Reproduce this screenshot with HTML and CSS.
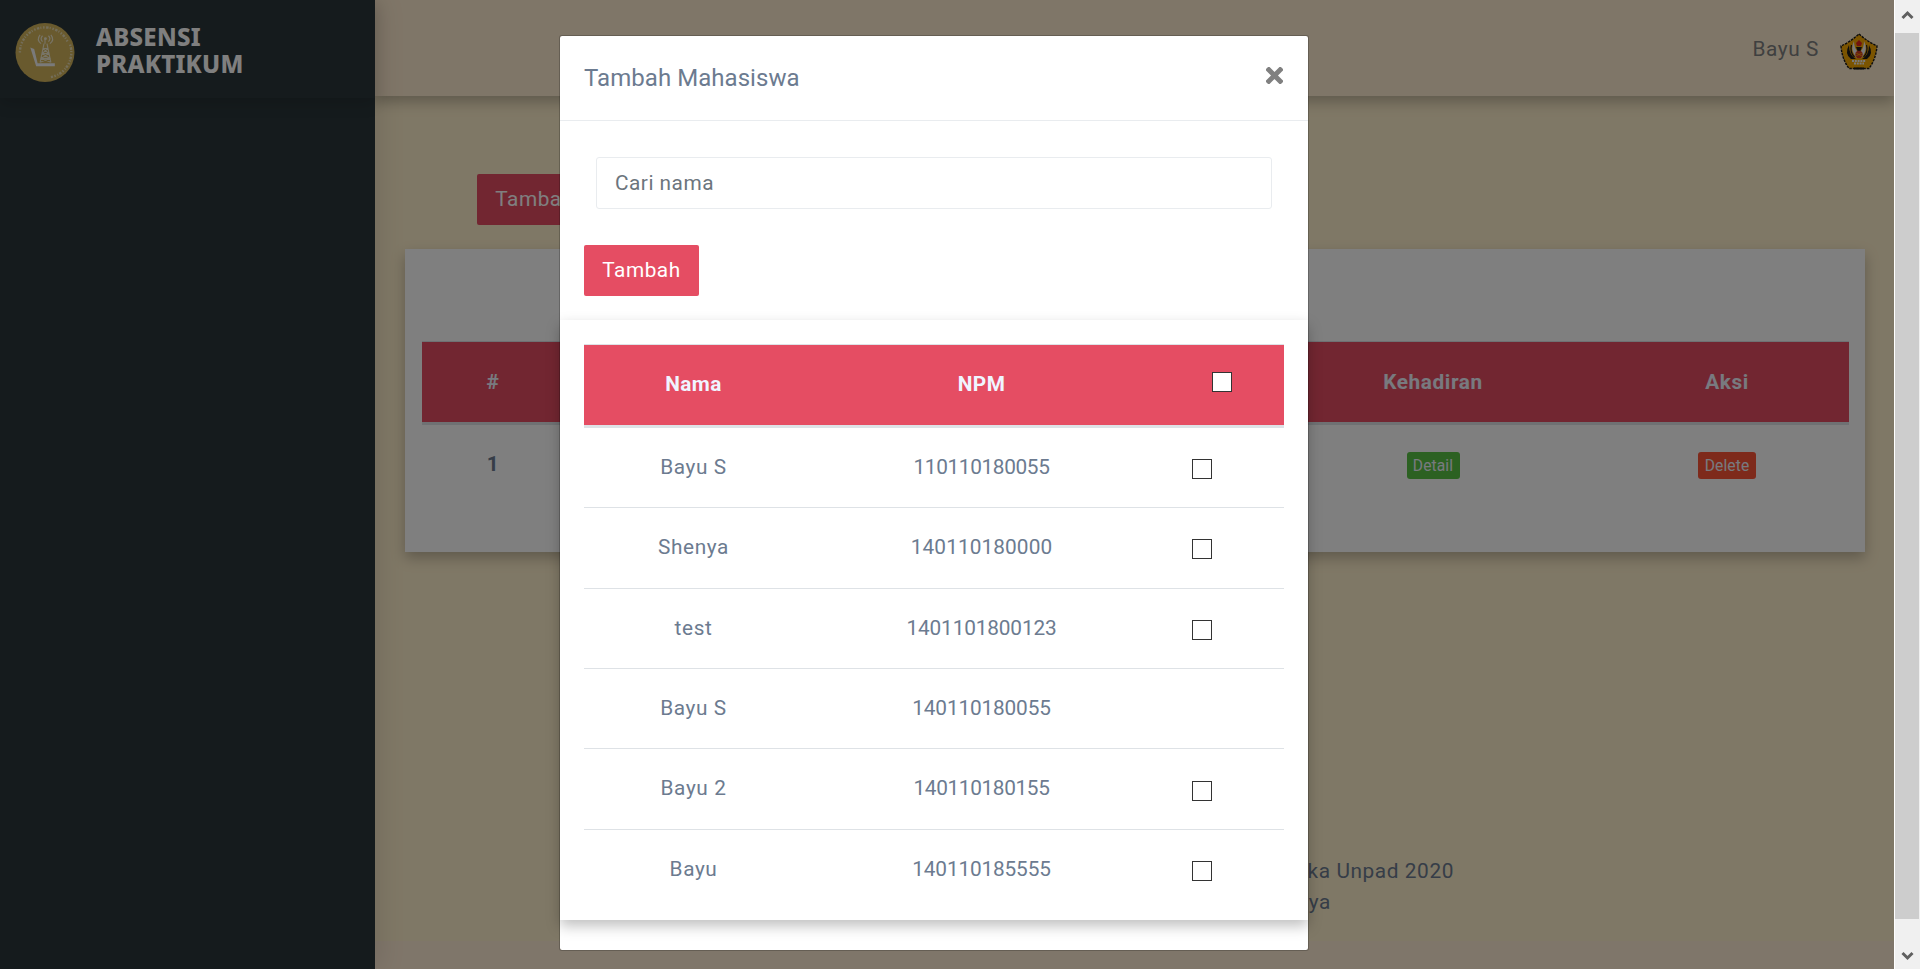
FILE: index.html
```html
<!DOCTYPE html>
<html lang="id">
<head>
<meta charset="utf-8">
<title>Absensi Praktikum</title>
<link rel="stylesheet" href="styles.css">
</head>
<body>
<div class="page">
  <aside class="sidebar">
    <div class="brand">
      <svg class="brand-logo" viewBox="0 0 60 60">
        <circle cx="30" cy="30" r="30" fill="#d2b45c"/>
        <path d="M4.500 30A25.500 25.500 0 0 1 53 19" fill="none" stroke="#e9ddb4" stroke-width="2.400" stroke-dasharray="1.500 1.500 2.500 1.200 1 1.800"/>
        <path d="M55.500 22A25.500 25.500 0 0 1 36 55" fill="none" stroke="#e9ddb4" stroke-width="2.400" stroke-dasharray="1.500 1.500 2.500 1.200 1 1.800"/>
        <path d="M15 25l4 1.500 3.500 14.500H40v3H21z" fill="#f4f4f4"/>
        <path d="M30 15v6M29 21l-4 19M32 21l4 19M28 26h5M27 31h7M26 36h9M28 26l6 5-8 5 10 4M33 26l-6 5 8 5-10 4" fill="none" stroke="#f1ead0" stroke-width="1.100"/>
        <path d="M27.500 13q-3 3 0 6M25 12q-4 5 1 9M33.500 13q3 3 0 6M36 12q4 5-1 9" fill="none" stroke="#f1ead0" stroke-width="1.200"/>
        <circle cx="30.500" cy="16" r="1.400" fill="#f1ead0"/>
      </svg>
      <div class="brand-name">ABSENSI<br>PRAKTIKUM</div>
    </div>
  </aside>
  <main class="main">
    <header class="topbar">
      <span class="user">Bayu S</span>
      <svg class="avatar" viewBox="0 0 38 37">
        <path d="M19 1Q28 9 37 13Q36 26 29 35.500H9Q2 26 1 13Q10 9 19 1z" fill="#f6a800" stroke="#191919" stroke-width="1.400" stroke-dasharray="2.500 1"/>
        <path d="M14 8q-4 8 1 15l2 2v-7q-3-4-3-10zM24 8q4 8-1 15l-2 2v-7q3-4 3-10z" fill="#f5f5f5"/>
        <path d="M9 12q-5 9 2 14h5q-7-4-7-14zM29 12q5 9-2 14h-5q7-4 7-14zM16 14h6l-2 5h-2z" fill="#1c1c1c"/>
        <path d="M11.500 12q-2 7 3 12M26.500 12q2 7-3 12" fill="none" stroke="#1c1c1c" stroke-width="1.200"/>
        <path d="M19 7l3 3-1 3h-4l-1-3z" fill="#e5271c"/>
        <circle cx="19" cy="21.500" r="3.700" fill="#d33b23"/>
        <path d="M16 20l6 3M16 23l6-3" stroke="#f6a800" stroke-width=".8"/>
        <path d="M12 28h14M14 30.500h10" stroke="#f5f5f5" stroke-width="1.800" stroke-dasharray="2 .8"/>
        <path d="M14 35.500h10" stroke="#191919" stroke-width="2"/>
      </svg>
    </header>
    <section class="content">
      <button class="btn open-modal">Tambah</button>
      <div class="card sessions">
        <div class="row head"><span>#</span><span></span><span>Kehadiran</span><span>Aksi</span></div>
        <div class="row item"><b>1</b><span></span><span><a class="badge detail">Detail</a></span><span><a class="badge delete">Delete</a></span></div>
      </div>
    </section>
    <footer class="footer">
      <div class="line-one">Informatika Unpad 2020</div>
      <div class="line-two">Shenya</div>
    </footer>
  </main>
  <div class="backdrop">
    <div class="modal">
      <div class="modal-header">
        <h5>Tambah Mahasiswa</h5>
        <svg class="close" viewBox="0 0 17 17"><path d="M2.800 2.800L14.200 14.200M14.200 2.800L2.800 14.200" stroke="#808080" stroke-width="5" stroke-linecap="square"/></svg>
      </div>
      <div class="modal-form">
        <input class="search" type="text" placeholder="Cari nama">
        <button class="btn">Tambah</button>
      </div>
      <div class="students">
        <div class="srow shead"><span>Nama</span><span>NPM</span><i class="check"></i></div>
        <div class="srow"><span>Bayu S</span><span class="npm narrow">110110180055</span><i class="check"></i></div>
        <div class="srow"><span>Shenya</span><span class="npm wide">140110180000</span><i class="check"></i></div>
        <div class="srow"><span>test</span><span class="npm">1401101800123</span><i class="check"></i></div>
        <div class="srow"><span>Bayu S</span><span class="npm">140110180055</span></div>
        <div class="srow"><span>Bayu 2</span><span class="npm narrow">140110180155</span><i class="check"></i></div>
        <div class="srow"><span>Bayu</span><span class="npm">140110185555</span><i class="check"></i></div>
      </div>
    </div>
  </div>
</div>
<div class="scrollbar">
  <svg class="arrow" viewBox="0 0 25 33"><path d="M7.500 18L12.500 13L17.500 18" fill="none" stroke="#606060" stroke-width="3"/></svg>
  <div class="thumb"></div>
  <svg class="arrow arrow-down" viewBox="0 0 25 50"><path d="M7.500 34L12.500 39L17.500 34" fill="none" stroke="#606060" stroke-width="3"/></svg>
</div>
</body>
</html>
```
FILE: styles.css
```css
* { box-sizing: border-box; }
body {
  margin: 0;
  height: 969px;
  display: flex;
  overflow: hidden;
  font: 20.8px/31.2px Roboto, sans-serif;
  letter-spacing: 0.6px;
  color: #6c7b90;
}
.page { position: relative; width: 1894px; height: 969px; display: flex; overflow: hidden; }

.sidebar { width: 375px; background: #2a363a; box-shadow: 5px 0 25px rgba(0, 0, 0, .1); z-index: 1; }
.brand { height: 98px; padding: 23px 0 0 15px; display: flex; gap: 21px; box-shadow: 0 5px 15px rgba(0, 0, 0, .15); }
.brand-logo { width: 60px; height: 59px; }
.brand-name { color: #fff; font: 800 24px/27px "Noto Sans", sans-serif; letter-spacing: 0.25px; }

.main { flex: 1; background: linear-gradient(#fff0cc 0 941px, #ffecd4 941px); display: flex; flex-direction: column; }
.topbar {
  height: 96px;
  padding: 0 16px 0 0;
  background: #ffecd0;
  box-shadow: 0 6px 13px rgba(0, 0, 0, .25);
  display: flex;
  justify-content: flex-end;
  align-items: center;
  gap: 21px;
}
.user { color: #7f8080; padding-top: 3px; }
.avatar { width: 38px; height: 37px; margin-top: 6px; }
.content { height: 456px; padding: 78px 29px 0 30px; }
.btn {
  display: block;
  height: 51px;
  width: 115px;
  padding: 1px 0 0;
  border: 0;
  border-radius: 2px;
  background: #e54d63;
  color: #fff;
  font: inherit;
  letter-spacing: 0.5px;
}
.open-modal { margin-left: 72px; }
.card { background: #fff; box-shadow: 0 6px 13px rgba(0, 0, 0, .25); }
.sessions { margin-top: 24px; height: 303px; padding: 92px 16px 0 17px; }
.row { display: grid; grid-template-columns: 142px 1fr 344px 244px; text-align: center; align-items: center; }
.head {
  height: 84px;
  padding-top: 2px;
  border-top: 1px solid #dee2e6;
  border-bottom: 3px solid #dee2e6;
  background: #e54d63;
  color: #f0f4ff;
  font-weight: 700;
}
.item { height: 80px; }
.item b { color: #6c7b90; }
.badge {
  display: inline-block;
  height: 27px;
  border-radius: 3px;
  color: #f0f4ff;
  font-size: 15.6px;
  line-height: 28px;
  letter-spacing: 0.1px;
}
.detail { width: 53px; background: #59c245; }
.delete { width: 58px; background: #fc5537; }
.footer { margin-top: 304px; color: #6c7b90; text-align: right; }
.line-one { padding-right: 440px; }
.line-two { padding-right: 563px; }

.backdrop {
  position: absolute;
  inset: 0;
  z-index: 2;
  padding-top: 35px;
  background: rgba(0, 0, 0, .5);
}
.modal {
  width: 750px;
  height: 916px;
  margin-left: 559px;
  border: 1px solid rgba(0, 0, 0, .2);
  border-radius: 3px;
  background: #fff;
  background-clip: padding-box;
}
.modal-header {
  height: 85px;
  padding: 0 25px 0 24px;
  border-bottom: 1px solid #e9ecef;
  display: flex;
  justify-content: space-between;
  align-items: center;
}
.modal-header h5 { margin: 2px 0 0; font-size: 24px; font-weight: 400; letter-spacing: 0.05px; }
.close { width: 17px; height: 17px; margin-top: -6px; }
.modal-form { height: 199px; padding: 36px 24px 0; }
.search {
  display: block;
  width: 676px;
  height: 52px;
  margin: 0 0 36px 12px;
  padding: 0 18px;
  border: 1px solid #e9ecef;
  border-radius: 3px;
  background: #fff;
  font: inherit;
  letter-spacing: 0.5px;
}
.search::placeholder { color: #6c757d; opacity: 1; }
.students { height: 600px; padding: 24px 24px 0; background: #fff; box-shadow: 0 6px 13px rgba(0, 0, 0, .25); }
.srow {
  display: grid;
  grid-template-columns: 219px 357px 124px;
  height: 80.4px;
  border-top: 1px solid #dee2e6;
  text-align: center;
  align-items: center;
}
.srow.shead { height: 84px; border-bottom: 3px solid #dee2e6; background: #e54d63; color: #f0f4ff; font-weight: 700; letter-spacing: 0.4px; }
.shead + .srow { border-top: 0; height: 79.2px; }
.npm { letter-spacing: -0.15px; }
.npm.narrow { letter-spacing: -0.35px; }
.npm.wide { letter-spacing: 0.1px; }
.check { width: 20px; height: 20px; margin: 3px 0 0 32px; border: 1px solid #333; background: #fff; }
.shead .check { margin: -6px 0 0 52px; }

.scrollbar { width: 26px; height: 969px; border-left: 1px solid #fff; background: #f0f0f0; display: flex; flex-direction: column; }
.arrow { width: 25px; height: 33px; }
.arrow-down { height: 50px; }
.thumb { width: 24px; height: 886px; background: #cdcdcd; }
```
